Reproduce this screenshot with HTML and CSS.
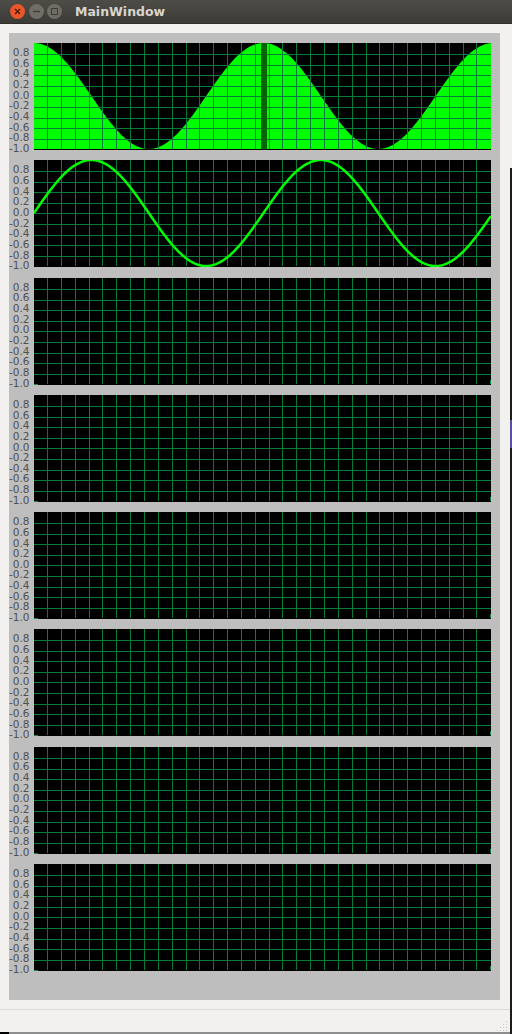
FILE: index.html
```html
<!DOCTYPE html>
<html lang="en">
  <head>
    <meta charset="UTF-8" />
    <title>MainWindow</title>
    <link rel="stylesheet" href="styles.css" />
  </head>
  <body>
    <div class="window">
      <div class="titlebar">
        <div class="buttons">
          <svg class="btn" width="15" height="15" viewBox="0 0 15 15">
            <circle cx="7.5" cy="7.5" r="7.5" fill="#e9562a" />
            <path d="M5 5l5 5M10 5l-5 5" stroke="#4a1a08" stroke-width="1.3" />
          </svg>
          <svg class="btn" width="15" height="15" viewBox="0 0 15 15">
            <circle cx="7.5" cy="7.5" r="7.5" fill="#6f6d65" />
            <path d="M4 7.5h7" stroke="#3c3b37" stroke-width="1.3" />
          </svg>
          <svg class="btn" width="15" height="15" viewBox="0 0 15 15">
            <circle cx="7.5" cy="7.5" r="7.5" fill="#6f6d65" />
            <rect x="4.5" y="4.5" width="6" height="6" fill="none" stroke="#3c3b37" />
          </svg>
        </div>
        <span class="title">MainWindow</span>
      </div>
      <div class="content">
        <div class="panel" id="plots"></div>
      </div>
      <div class="statusbar">
        <svg class="grip" width="12" height="12" viewBox="0 0 12 12" fill="#c9c7c1">
          <rect x="9" y="1" width="1" height="1" /><rect x="6" y="4" width="1" height="1" />
          <rect x="9" y="4" width="1" height="1" /><rect x="3" y="7" width="1" height="1" />
          <rect x="6" y="7" width="1" height="1" /><rect x="9" y="7" width="1" height="1" />
          <rect x="0" y="10" width="1" height="1" /><rect x="3" y="10" width="1" height="1" />
          <rect x="6" y="10" width="1" height="1" /><rect x="9" y="10" width="1" height="1" />
        </svg>
      </div>
      <div class="bottom-edge"></div>
    </div>
    <div class="desktop-edge"></div>
    <script src="plots.js"></script>
  </body>
</html>
```

FILE: styles.css
```css
* {
  box-sizing: border-box;
}
html,
body {
  margin: 0;
  height: 100%;
  overflow: hidden;
}
body {
  background: #f2f1f0;
  font-family: "DejaVu Sans", sans-serif;
}
.window {
  height: 1034px;
  display: flex;
  flex-direction: column;
}
.titlebar {
  height: 24px;
  flex: none;
  display: flex;
  align-items: center;
  padding-left: 10px;
  background: linear-gradient(#4d4c47, #3c3b37);
  border-bottom: 1px solid #2f2e2b;
}
.buttons {
  display: flex;
  gap: 3.5px;
  width: 65px;
}
.btn {
  display: block;
}
.title {
  color: #d9d5cd;
  font-size: 12.5px;
  font-weight: bold;
}
.content {
  flex: none;
  height: 985px;
  padding: 9px 12px 9px 9px;
}
.panel {
  height: 967px;
  background: #bebebe;
  padding: 10px 9px 0 0;
  display: flex;
  flex-direction: column;
  gap: 10.3px;
}
.row {
  height: 107px;
  flex: none;
  display: flex;
}
.labels {
  width: 25px;
  height: 107px;
  flex: none;
  padding: 4px 4.5px 0 0;
  display: flex;
  flex-direction: column;
  align-items: flex-end;
  color: #505050;
  font-size: 10.5px;
}
.labels span {
  flex: none;
  height: 10.67px;
  line-height: 10.67px;
}
.plot {
  display: block;
  flex: 1;
  height: 107px;
  background: #000;
}
.statusbar {
  flex: 1;
  border-top: 1px solid #dcdad6;
  display: flex;
  justify-content: flex-end;
  align-items: flex-end;
  padding-right: 3px;
}
.bottom-edge {
  height: 2px;
  flex: none;
  background: #8d8d8d;
  border-left: 9px solid #000;
}
/* bit of the desktop showing past the window edge */
.desktop-edge {
  position: absolute;
  right: 0;
  top: 168px;
  bottom: 0;
  width: 2px;
  background: linear-gradient(#1c1c1c 252px, #5a4f9a 252px, #5a4f9a 280px, #1c1c1c 280px);
}
```

FILE: plots.js
```js
// 8 scope plots, only the first two have data
const W = 457;
const H = 106;
const COLS = 33;
const ROWS = 10;
const labels = ["0.8", "0.6", "0.4", "0.2", "0.0", "-0.2", "-0.4", "-0.6", "-0.8", "-1.0"];
const PERIOD = 229.5;

function curve(fn) {
  let pts = [];
  for (let x = 0; x <= W; x++) {
    let y = ((1 - fn(x)) * H) / 2;
    pts.push(x + "," + y.toFixed(2));
  }
  return pts;
}

function grid() {
  let out = "";
  for (let i = 1; i < COLS; i++) {
    let x = Math.floor((i * W) / COLS - 0.3);
    out += `<path d="M${x + 0.5} 0V${H}" />`;
  }
  for (let i = 1; i < ROWS; i++) {
    let y = Math.round(0.4 + (i * H) / ROWS);
    out += `<path d="M0 ${y + 0.5}H${W}" />`;
  }
  return `<g stroke="#057c38" stroke-width="1">${out}</g>`;
}

function plot(i) {
  let data = "";
  if (i == 0) {
    let pts = curve((x) => Math.cos((x * 2 * Math.PI) / PERIOD));
    data = `<polygon fill="#00ff00" points="0,${H} ${pts.join(" ")} ${W},${H}" />` + grid();
    data += `<rect x="227" y="0" width="6" height="${H}" fill="#006400" />`;
  } else if (i == 1) {
    let pts = curve((x) => Math.sin((x * 2 * Math.PI) / PERIOD));
    data = grid() + `<polyline fill="none" stroke="#00ff00" stroke-width="2.5" points="${pts.join(" ")}" />`;
  } else {
    data = grid();
    data += `<path d="M0 ${H + 0.5}H4M${W - 0.5} ${H - 4}V${H}" stroke="#0a8a3a" />`;
  }
  return /*html*/ `
    <div class="row">
      <div class="labels">${labels.map((l) => `<span>${l}</span>`).join("")}</div>
      <svg class="plot" width="${W}" height="107" viewBox="0 0 ${W} 107">${data}</svg>
    </div>`;
}

document.querySelector("#plots").innerHTML = [0, 1, 2, 3, 4, 5, 6, 7].map(plot).join("");
```
